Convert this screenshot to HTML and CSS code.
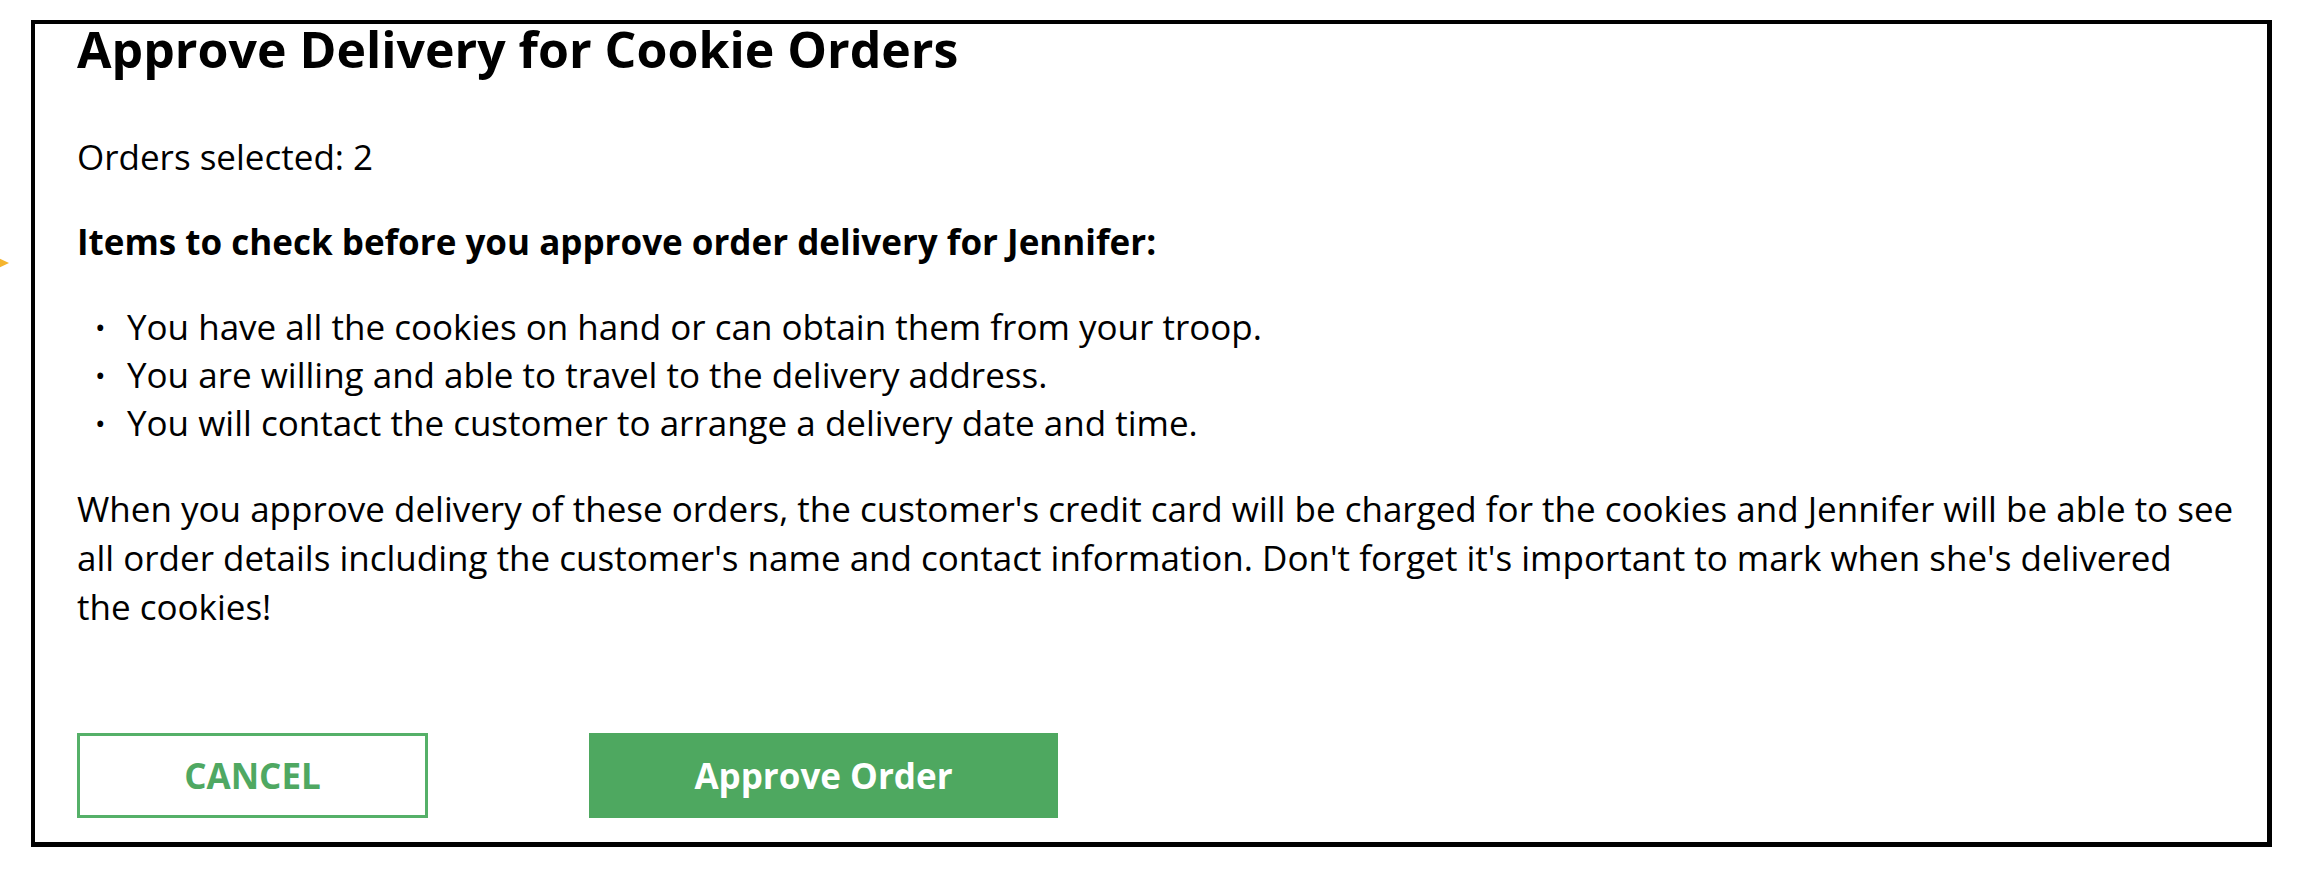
FILE: index.html
```html
<!DOCTYPE html>
<html lang="en">
<head>
    <meta charset="UTF-8">
    <title>Approve Delivery for Cookie Orders</title>
    <link rel="stylesheet" href="styles.css">
</head>
<body>
    <div class="pointer"></div>
    <div class="dialog">
        <h1>Approve Delivery for Cookie Orders</h1>
        <p class="count">Orders selected: 2</p>
        <p class="checklist-title">Items to check before you approve order delivery for Jennifer:</p>
        <ul class="checklist">
            <li>You have all the cookies on hand or can obtain them from your troop.</li>
            <li>You are willing and able to travel to the delivery address.</li>
            <li>You will contact the customer to arrange a delivery date and time.</li>
        </ul>
        <p class="notice">When you approve delivery of these orders, the customer's credit card will be charged for the cookies and Jennifer will be able to see<br>
            all order details including the customer's name and contact information. Don't forget it's important to mark when she's delivered<br>
            the cookies!</p>
        <div class="actions">
            <a href="#" class="btn btn-cancel">CANCEL</a>
            <a href="#" class="btn btn-approve">Approve Order</a>
        </div>
    </div>
</body>
</html>
```

FILE: styles.css
```css
body {
    margin: 0;
    font-family: 'Open Sans', 'Noto Sans', sans-serif;
    font-size: 35px;
    line-height: 48px;
    color: #000;
    background: #fff;
}
.pointer {
    position: absolute;
    left: -8px;
    top: 255px;
    width: 0;
    height: 0;
    border-top: 8px solid transparent;
    border-bottom: 8px solid transparent;
    border-left: 17px solid #f5b52e;
}
.dialog {
    box-sizing: border-box;
    width: 2241px;
    height: 827px;
    margin: 20px 0 0 31px;
    border: 5px solid #000;
    border-top-width: 4px;
    border-left-width: 4px;
    padding: 0 10px 0 42px;
}
h1 {
    margin: 0;
    font-size: 50px;
    line-height: 50px;
    font-weight: 700;
}
p {
    margin: 0;
}
.count {
    margin-top: 59px;
}
.checklist-title {
    margin-top: 37px;
    font-weight: 700;
}
.checklist {
    margin: 37px 0 0;
    padding: 0;
    list-style: none;
}
.checklist li {
    position: relative;
    padding-left: 50px;
}
.checklist li::before {
    content: "\2022";
    position: absolute;
    left: 18px;
    font-size: 28px;
}
.notice {
    margin-top: 37px;
    line-height: 49px;
}
.actions {
    display: flex;
    gap: 161px;
    margin-top: 102px;
}
.btn {
    box-sizing: border-box;
    display: flex;
    align-items: center;
    justify-content: center;
    height: 85px;
    font-weight: 700;
    text-decoration: none;
}
.btn-cancel {
    width: 351px;
    border: 3px solid #55b068;
    color: #4fa862;
}
.btn-approve {
    width: 469px;
    background: #4ea860;
    color: #fff;
}
```
